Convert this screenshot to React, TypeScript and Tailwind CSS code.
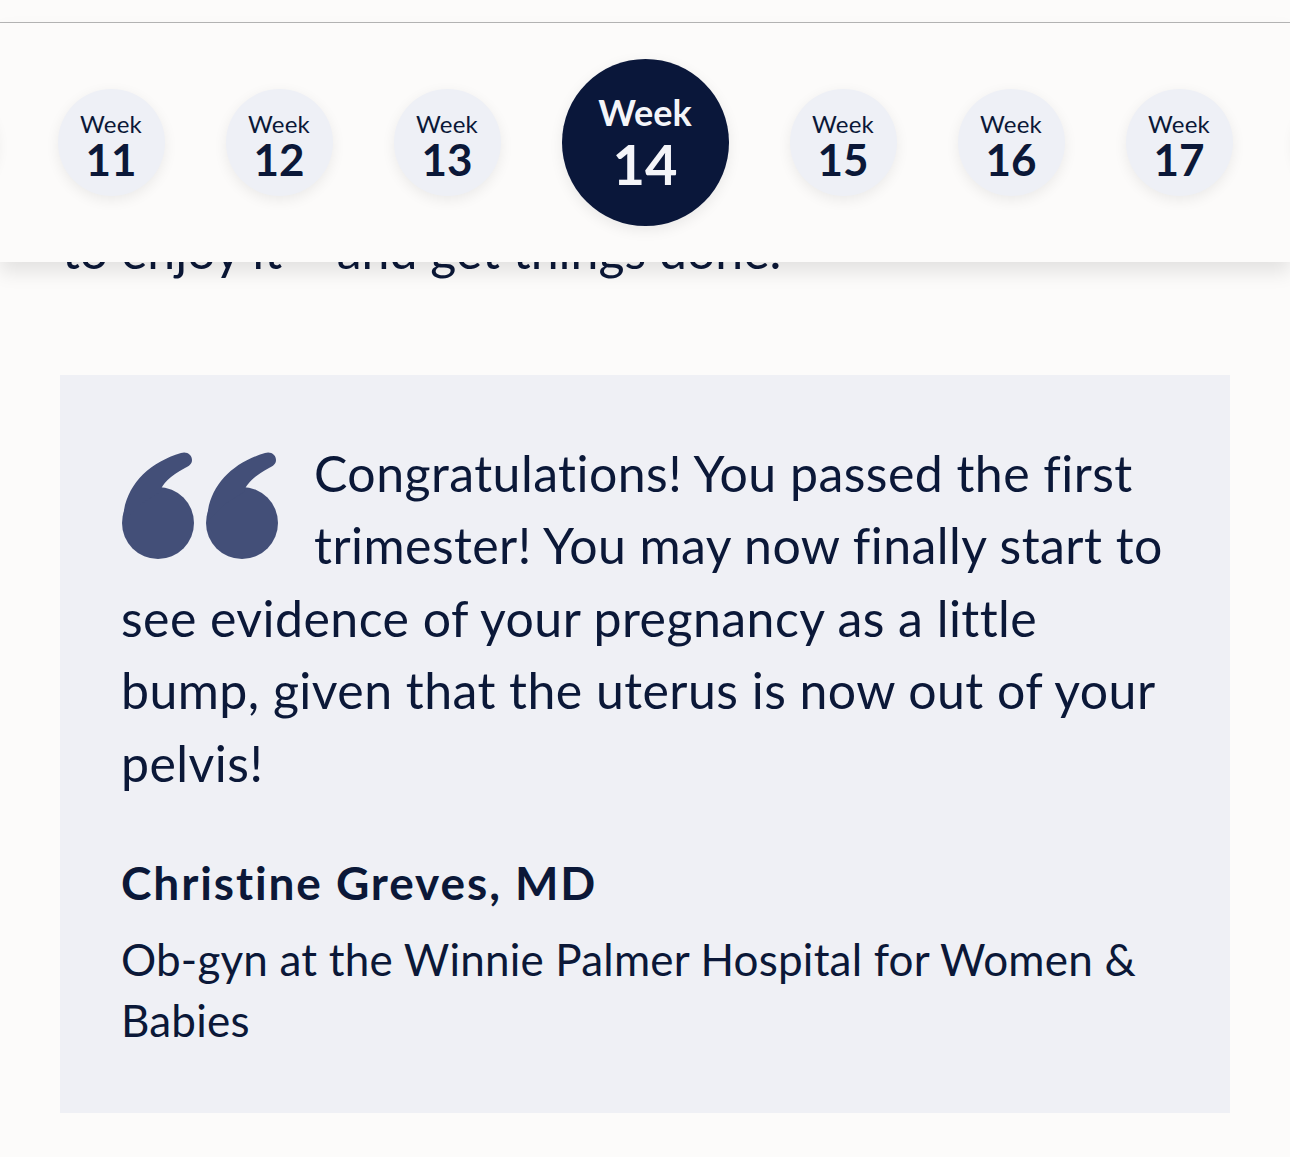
import React from "react";

const font = { fontFamily: "Lato, 'Noto Sans', sans-serif" };

function SmallWeek({ n }: { n: number }) {
  return (
    <div className="flex h-[107px] w-[107px] shrink-0 flex-col items-center justify-center rounded-full bg-[#eef0f6] pt-[6px] text-[#0b1838] shadow-[0_4px_14px_rgba(0,0,0,0.07)]">
      <span className="text-[24px] leading-[26px] tracking-[0.3px]">Week</span>
      <span className="text-[44px] font-bold leading-[44px]">{n}</span>
    </div>
  );
}

function BigWeek({ n }: { n: number }) {
  return (
    <div className="flex h-[167px] w-[167px] shrink-0 flex-col items-center justify-center rounded-full bg-[#0a173a] text-[#f4f5f9] shadow-[0_4px_14px_rgba(0,0,0,0.08)]">
      <span className="text-[36px] font-bold leading-[42px]">Week</span>
      <span className="text-[56px] font-bold leading-[62px]">{n}</span>
    </div>
  );
}

function QuoteMark() {
  const mark = (dx: number) => (
    <g transform={`translate(${dx},0)`}>
      <circle cx="37" cy="71" r="36" />
      <path d="M2,70 C2,36 26,11 60,1 C66,-1 71,3 71,8 C71,12 68,14 64,16 C49,24 41,32 39,40 L20,52 Z" />
    </g>
  );
  return (
    <svg width="157" height="108" viewBox="0 0 157 108" className="float-left mr-[36px] mt-[15px]" fill="#434f78">
      {mark(0)}
      {mark(84)}
    </svg>
  );
}

export default function App() {
  return (
    <div className="min-h-[1157px] w-[1290px] overflow-hidden bg-[#fcfbfa] text-[#0b1838]" style={font}>
      <div className="h-[23px] border-b border-[#b5b5b5]" />
      <div className="relative z-10 flex h-[239px] items-center justify-center gap-[61px] overflow-hidden bg-[#fcfbfa] shadow-[0_10px_18px_rgba(0,0,0,0.10)]">
        <SmallWeek n={10} />
        <SmallWeek n={11} />
        <SmallWeek n={12} />
        <SmallWeek n={13} />
        <BigWeek n={14} />
        <SmallWeek n={15} />
        <SmallWeek n={16} />
        <SmallWeek n={17} />
        <SmallWeek n={18} />
      </div>
      <p className="relative z-0 -mt-[48px] pl-[62px] text-[50px] leading-[72.5px]">
        to enjoy it – and get things done.
      </p>
      <div className="mx-[60px] mt-[88px] bg-[#eff0f5] pb-[62px] pl-[61px] pr-[40px] pt-[62px]">
        <div className="text-[50px] leading-[72.5px] tracking-[0.45px]">
          <QuoteMark />
          Congratulations! You passed the first
          <br />
          trimester! You may now finally start to
          <br />
          see evidence of your pregnancy as a little
          <br />
          bump, given that the uterus is now out of your
          <br />
          pelvis!
        </div>
        <div className="clear-both mt-[56px] text-[46px] font-bold leading-[56px] tracking-[1.9px]">
          Christine Greves, MD
        </div>
        <div className="mt-[18px] text-[44px] leading-[61px] tracking-[0.2px]">
          Ob-gyn at the Winnie Palmer Hospital for Women &amp;
          <br />
          Babies
        </div>
      </div>
    </div>
  );
}
